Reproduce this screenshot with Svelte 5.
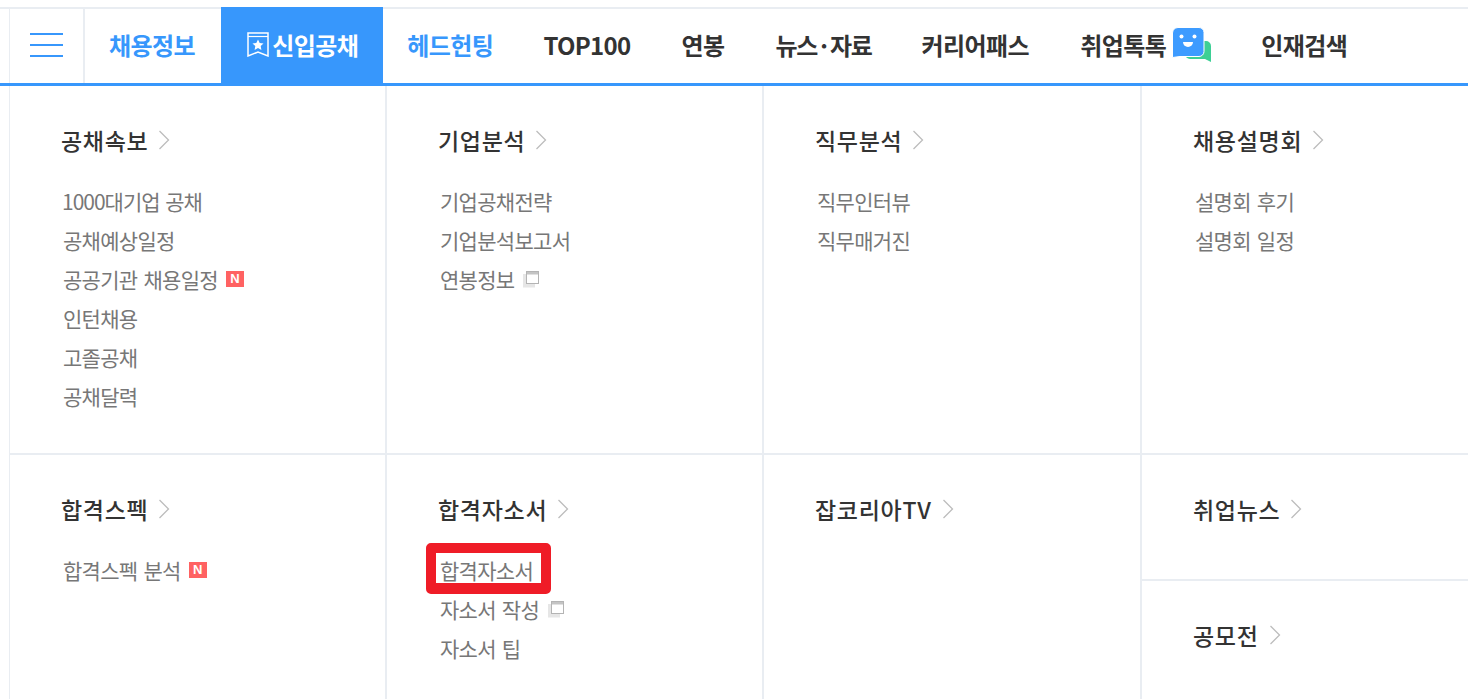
<script>
	const navItems = [
		{ label: '채용정보', tone: 'blue' },
		{ label: '신입공채', active: true },
		{ label: '헤드헌팅', tone: 'blue' },
		{ label: 'TOP100', tone: 'wide' },
		{ label: '연봉', tone: 'roomy' },
		{ label: '뉴스·자료', tone: 'tight' },
		{ label: '커리어패스', tone: 'roomy' },
		{ label: '취업톡톡', chat: true },
		{ label: '인재검색' }
	];

	const topRow = [
		{
			title: '공채속보',
			links: [
				{ label: '1000대기업 공채', dense: true },
				{ label: '공채예상일정' },
				{ label: '공공기관 채용일정', badge: true },
				{ label: '인턴채용' },
				{ label: '고졸공채' },
				{ label: '공채달력' }
			]
		},
		{
			title: '기업분석',
			links: [{ label: '기업공채전략' }, { label: '기업분석보고서' }, { label: '연봉정보', popup: true }]
		},
		{ title: '직무분석', links: [{ label: '직무인터뷰' }, { label: '직무매거진' }] },
		{ title: '채용설명회', links: [{ label: '설명회 후기' }, { label: '설명회 일정' }] }
	];

	const bottomRow = [
		{ title: '합격스펙', links: [{ label: '합격스펙 분석', badge: true }] },
		{
			title: '합격자소서',
			links: [{ label: '합격자소서', marked: true }, { label: '자소서 작성', popup: true }, { label: '자소서 팁' }]
		},
		{ title: '잡코리아TV', links: [] }
	];
</script>

{#snippet chevron()}
	<svg class="chevron" width="12" height="20" viewBox="0 0 12 20" aria-hidden="true">
		<path d="M1.5 1 10.5 10 1.5 19" fill="none" stroke="#bdbdbd" stroke-width="1.3" />
	</svg>
{/snippet}

{#snippet section(block)}
	<h3>{block.title}{@render chevron()}</h3>
	{#if block.links.length}
		<ul>
			{#each block.links as link}
				<li class:dense={link.dense}>
					<span class:marked={link.marked}>{link.label}</span>
					{#if link.badge}
						<b class="badge">N</b>
					{/if}
					{#if link.popup}
						<svg class="popup" width="18" height="18" viewBox="0 0 18 18" aria-hidden="true">
							<rect x="1" y="4" width="12" height="13.5" fill="#e6e6e6" />
							<rect x="4.5" y="1.5" width="12" height="12" fill="#fff" stroke="#b4b4b4" />
							<rect x="5" y="2" width="11" height="2.5" fill="#c4c4c4" />
						</svg>
					{/if}
				</li>
			{/each}
		</ul>
	{/if}
{/snippet}

<div class="page">
	<nav>
		<button class="menu" aria-label="전체메뉴">
			<i></i><i></i><i></i>
		</button>
		{#each navItems as item}
			<a href="#top" class="nav-item {item.tone ?? ''}" class:active={item.active}>
				{#if item.active}
					<svg class="ribbon" width="22" height="25" viewBox="0 0 22 25" aria-hidden="true">
						<path d="M1 1h20v23l-10-4-10 4z" fill="none" stroke="#fff" stroke-width="1.5" />
						<path d="M1 4.5h20" stroke="#fff" stroke-width="1.2" />
						<path d="M11 7.5l1.7 3.5 3.8.5-2.8 2.6.7 3.8-3.4-1.8-3.4 1.8.7-3.8-2.8-2.6 3.8-.5z" fill="#fff" />
					</svg>
				{/if}
				{item.label}
				{#if item.chat}
					<svg class="chat" width="40" height="35" viewBox="0 0 40 35" aria-hidden="true">
						<path d="M18 14h16a5 5 0 0 1 5 5v16l-6-3H18a5 5 0 0 1-5-5v-8a5 5 0 0 1 5-5z" fill="#3dcf95" />
						<path d="M6 .5h21a5 5 0 0 1 5 5v19a5 5 0 0 1-5 5H8l-7.500 1V6a6 6 0 0 1 5.500-5.500z" fill="#3d9bff" stroke="#fff" stroke-width="1" />
						<circle cx="9.500" cy="9.500" r="2" fill="#fff" />
						<circle cx="22.500" cy="9.500" r="2" fill="#fff" />
						<path d="M11 15h10a5 5 0 0 1-10 0z" fill="#fff" />
					</svg>
				{/if}
			</a>
		{/each}
	</nav>

	<div class="panel">
		{#each topRow as block}
			<section class="top">{@render section(block)}</section>
		{/each}
		{#each bottomRow as block}
			<section>{@render section(block)}</section>
		{/each}
		<div class="stack">
			<section>{@render section({ title: '취업뉴스', links: [] })}</section>
			<section>{@render section({ title: '공모전', links: [] })}</section>
		</div>
	</div>
</div>

<style>
	:global(body) {
		background: #fff;
		overflow: hidden;
	}

	.page {
		height: 699px;
		overflow: hidden;
		padding-top: 7px;
		box-sizing: border-box;
		font-family: 'Noto Sans CJK KR', 'Noto Sans', sans-serif;
	}

	nav {
		display: flex;
		height: 79px;
		box-sizing: border-box;
		padding-left: 9px;
		border-top: 2px solid #e9edf2;
		border-bottom: 3px solid #3797fc;
	}

	.menu {
		width: 76px;
		box-sizing: border-box;
		display: flex;
		flex-direction: column;
		align-items: center;
		gap: 9px;
		padding: 24px 0 0;
		background: none;
		border: 0;
		border-left: 1px solid #e9edf2;
		border-right: 2px solid #e9edf2;
	}

	.menu i {
		width: 33px;
		height: 2px;
		background: #3797fc;
	}

	.nav-item {
		display: flex;
		align-items: center;
		padding: 0 26px 4px 24px;
		font-size: 24px;
		font-weight: 700;
		letter-spacing: -0.55px;
		color: #333;
		text-decoration: none;
		white-space: nowrap;
	}

	.nav-item.blue {
		color: #3797fc;
	}

	.nav-item.wide {
		letter-spacing: -0.7px;
		padding-right: 27px;
	}

	.nav-item.roomy {
		padding-right: 27px;
	}

	.nav-item.tight {
		letter-spacing: -1.3px;
	}

	.nav-item.active {
		gap: 3px;
		padding: 0 25px 4px 26px;
		margin: -2px 0 -3px;
		background: #3797fc;
		color: #fff;
	}

	.chat {
		margin: 1px -1px 0 6px;
	}

	.panel {
		display: grid;
		grid-template-columns: 377px 377px 378px 1fr;
		grid-template-rows: 369px 1fr;
		height: 613px;
		margin-left: 9px;
		border-left: 1px solid #e9edf2;
	}

	section {
		padding: 36px 0 0 51px;
		box-sizing: border-box;
		border-right: 2px solid #e9edf2;
	}

	section.top {
		border-bottom: 2px solid #e9edf2;
	}

	section:nth-child(4) {
		border-right: 0;
	}

	.stack {
		display: grid;
		grid-template-rows: 126px 1fr;
	}

	.stack section {
		border-right: 0;
	}

	.stack section:first-child {
		border-bottom: 2px solid #e9edf2;
	}

	h3 {
		display: flex;
		align-items: center;
		margin: 0;
		height: 36px;
		font-size: 23px;
		font-weight: 500;
		letter-spacing: 0.7px;
		color: #333;
	}

	.chevron {
		margin-left: 10px;
	}

	ul {
		list-style: none;
		margin: 23px 0 0;
		padding: 0 0 0 2px;
	}

	li {
		display: flex;
		align-items: center;
		height: 39px;
		line-height: 30px;
		font-size: 21px;
		letter-spacing: -0.7px;
		word-spacing: 2px;
		color: #777;
	}

	li.dense {
		letter-spacing: -1px;
		margin-left: -1px;
	}

	.marked {
		position: relative;
	}

	.marked::after {
		content: '';
		position: absolute;
		left: -14px;
		right: -18px;
		top: -12px;
		bottom: -9px;
		border: 10px solid #ef1c27;
		border-bottom-width: 11px;
		border-radius: 5px;
		pointer-events: none;
	}

	.badge {
		display: flex;
		align-items: center;
		justify-content: center;
		width: 18px;
		height: 16px;
		margin-left: 8px;
		background: #ff6262;
		color: #fff;
		font: 900 13px 'Liberation Sans', sans-serif;
		letter-spacing: 0;
	}

	.popup {
		margin-left: 8px;
	}
</style>
